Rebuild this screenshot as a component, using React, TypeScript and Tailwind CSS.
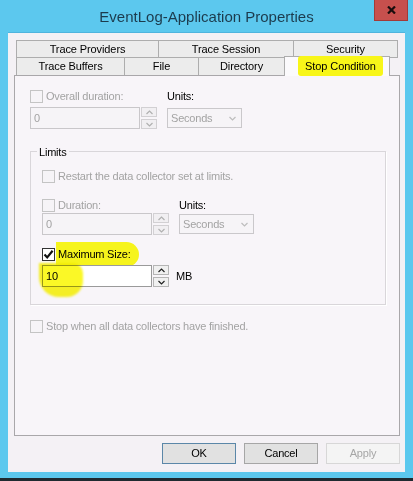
import type { ReactNode } from 'react'

const font = { fontFamily: '"Liberation Sans", Arial, sans-serif' }

function CheckBox({ checked = false, disabled = false }: { checked?: boolean; disabled?: boolean }) {
  return (
    <div
      className={`w-[13px] h-[13px] shrink-0 border flex items-center justify-center ${
        disabled ? 'border-[#c4c4c4] bg-[#f6f4f7]' : 'border-[#333] bg-white'
      }`}
    >
      {checked && (
        <svg width="11" height="11" viewBox="0 0 11 11">
          <path d="M1.5 5.5 L4.2 8.4 L9.6 1.8" fill="none" stroke="#111" strokeWidth="2.2" />
        </svg>
      )}
    </div>
  )
}

function Chevron({ up, color }: { up?: boolean; color: string }) {
  return (
    <svg width="7" height="5" viewBox="0 0 7 5">
      <path d={up ? 'M0.5 4 L3.5 1 L6.5 4' : 'M0.5 1 L3.5 4 L6.5 1'} fill="none" stroke={color} strokeWidth="1.2" />
    </svg>
  )
}

function SpinBox({ value, disabled = false }: { value: string; disabled?: boolean }) {
  return (
    <div className="flex h-[22px] w-[127px]">
      <div
        className={`w-[110px] h-full border flex items-center pl-[3px] text-[11px] ${
          disabled ? 'border-[#c9c7ca] text-[#a3a3a3] bg-[#f6f4f7]' : 'border-[#9a9a9a] text-black bg-white'
        }`}
      >
        {value}
      </div>
      <div className="flex flex-col justify-between ml-[1px] w-[16px] h-full">
        <div className={`h-[10px] border flex items-center justify-center ${disabled ? 'border-[#d2d0d3] bg-[#f1eff2]' : 'border-[#b5b5b5] bg-[#f0f0f0]'}`}>
          <Chevron up color={disabled ? '#b0b0b0' : '#222'} />
        </div>
        <div className={`h-[10px] border flex items-center justify-center ${disabled ? 'border-[#d2d0d3] bg-[#f1eff2]' : 'border-[#b5b5b5] bg-[#f0f0f0]'}`}>
          <Chevron color={disabled ? '#b0b0b0' : '#222'} />
        </div>
      </div>
    </div>
  )
}

function Select({ value }: { value: string }) {
  return (
    <div className="w-[75px] h-[20px] border border-[#cac8cb] bg-[#f6f4f7] flex items-center justify-between pl-[3px] pr-[5px] text-[11px] text-[#a3a3a3]">
      <span>{value}</span>
      <Chevron color="#bdbdbd" />
    </div>
  )
}

function Tab({ w, children, selected = false, h = 'h-[18px]', extra = '' }: { w: string; children: ReactNode; selected?: boolean; h?: string; extra?: string }) {
  return (
    <div
      className={`${w} ${h} ${extra} flex items-center justify-center text-[11px] tracking-[-0.1px] text-black border-[#adadad] ${
        selected ? 'relative z-10 bg-[#fbfafc] border-t border-l border-r -mt-[2px]' : 'bg-[#ececec]'
      }`}
    >
      {children}
    </div>
  )
}

export default function App() {
  return (
    <div className="w-[413px] h-[481px] bg-[#5cc8ee] flex flex-col overflow-hidden tracking-[-0.2px]" style={font}>
      {/* Title bar */}
      <div className="relative h-[32px] flex items-center justify-center shrink-0">
        <span className="text-[15px] tracking-normal text-[#1c3b4d] mt-[2px]">EventLog-Application Properties</span>
        <div className="absolute right-[5px] top-0 w-[34px] h-[21px] bg-[#c7504d] border border-[#a33a38] border-t-0 flex items-center justify-center">
          <svg width="9" height="8" viewBox="0 0 9 8">
            <path d="M1 0.5 L8 7.5 M8 0.5 L1 7.5" stroke="#1a0d0d" strokeWidth="2.2" />
          </svg>
        </div>
      </div>

      {/* Client area */}
      <div className="mx-[8px] h-[440px] bg-[#f4f1f5] shrink-0 pt-[8px] pl-[6px] border-t border-[#4fb4de]">
        {/* Tabs */}
        <div className="ml-[2px] w-[382px] -mt-px">
          <div className="flex">
            <Tab w="w-[143px]" extra="border">Trace Providers</Tab>
            <Tab w="w-[135px]" extra="border border-l-0">Trace Session</Tab>
            <Tab w="w-[104px]" extra="border border-l-0">Security</Tab>
          </div>
          <div className="flex h-[17px] items-start">
            <Tab w="w-[109px]" h="h-[17px]" extra="border-l border-r">Trace Buffers</Tab>
            <Tab w="w-[74px]" h="h-[17px]" extra="border-r">File</Tab>
            <Tab w="w-[86px]" h="h-[17px]" extra="border-r">Directory</Tab>
            <Tab w="w-[106px]" h="h-[20px]" selected extra="-ml-px pl-[7px]">
              <span className="relative">
                <span className="absolute -left-[7px] -right-[7px] -top-[2px] -bottom-[1px] bg-[#f8f619] rounded-[3px] blur-[0.6px]" />
                <span className="relative">Stop Condition</span>
              </span>
            </Tab>
          </div>
        </div>

        {/* Panel */}
        <div className="w-[386px] h-[361px] border border-[#a9a7aa] bg-[#f8f5f9] pl-[15px] text-[11px]">
          <div className="flex items-center h-[15px] mt-[13px]">
            <div className="w-[137px] flex items-center gap-[3px] text-[#a3a3a3]">
              <CheckBox disabled />
              <span>Overall duration:</span>
            </div>
            <span className="text-black">Units:</span>
          </div>
          <div className="flex items-start mt-[3px]">
            <div className="w-[137px]">
              <SpinBox value="0" disabled />
            </div>
            <div className="mt-[1px]">
              <Select value="Seconds" />
            </div>
          </div>

          {/* Limits groupbox */}
          <div className="relative mt-[22px] w-[356px] h-[154px] border border-[#d9d6da] shadow-[1px_1px_0_#ffffff] pl-[11px]">
            <span className="absolute -top-[8px] left-[6px] px-[2px] bg-[#f8f5f9] text-black">Limits</span>
            <div className="flex items-center gap-[3px] h-[13px] mt-[18px] text-[#a3a3a3]">
              <CheckBox disabled />
              <span>Restart the data collector set at limits.</span>
            </div>
            <div className="flex items-center h-[13px] mt-[16px]">
              <div className="w-[137px] flex items-center gap-[3px] text-[#a3a3a3]">
                <CheckBox disabled />
                <span>Duration:</span>
              </div>
              <span className="text-black">Units:</span>
            </div>
            <div className="flex items-start mt-[1px]">
              <div className="w-[137px]">
                <SpinBox value="0" disabled />
              </div>
              <div className="mt-[1px]">
                <Select value="Seconds" />
              </div>
            </div>
            <div className="flex items-center gap-[3px] h-[13px] mt-[13px] text-black">
              <CheckBox checked />
              <span className="relative">
                <span className="absolute -left-[2px] -right-[8px] -top-[4px] -bottom-[4px] bg-[#f6f41c] rounded-r-full rounded-l-[3px] blur-[0.6px]" />
                <span className="relative">Maximum Size:</span>
              </span>
            </div>
            <div className="relative flex items-center mt-[4px]">
              <SpinBox value="10" />
              <span className="ml-[7px] text-black">MB</span>
              <div className="absolute left-[-3px] top-[-2px] w-[44px] h-[34px] bg-[#fbf826] mix-blend-multiply rounded-bl-[20px] rounded-br-[16px] rounded-tr-[10px] blur-[1px]" />
            </div>
          </div>

          <div className="flex items-center gap-[3px] h-[13px] mt-[15px] text-[#a3a3a3]">
            <CheckBox disabled />
            <span>Stop when all data collectors have finished.</span>
          </div>
        </div>

        {/* Buttons */}
        <div className="w-[386px] flex justify-end gap-[8px] mt-[7px] text-[11px]">
          <div className="w-[74px] h-[21px] border border-[#5b87a8] bg-[#e1e1e1] flex items-center justify-center text-black">OK</div>
          <div className="w-[74px] h-[21px] border border-[#a6a6a6] bg-[#e1e1e1] flex items-center justify-center text-black">Cancel</div>
          <div className="w-[74px] h-[21px] border border-[#d7d7d7] bg-[#f4f4f4] flex items-center justify-center text-[#a6a6a6]">Apply</div>
        </div>
      </div>

      <div className="h-[6px] shrink-0" />
      <div className="flex-1 bg-[#1f2a30]" />
    </div>
  )
}
